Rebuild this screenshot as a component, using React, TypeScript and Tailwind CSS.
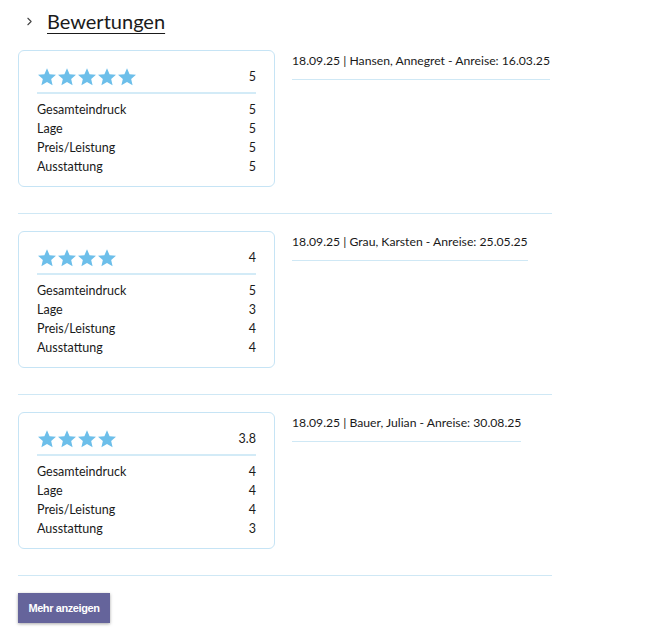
import { LuChevronRight } from "react-icons/lu";

type Review = {
  header: string;
  stars: number;
  score: string;
  rows: [string, number][];
};

const reviews: Review[] = [
  {
    header: "18.09.25 | Hansen, Annegret - Anreise: 16.03.25",
    stars: 5,
    score: "5",
    rows: [
      ["Gesamteindruck", 5],
      ["Lage", 5],
      ["Preis/Leistung", 5],
      ["Ausstattung", 5],
    ],
  },
  {
    header: "18.09.25 | Grau, Karsten - Anreise: 25.05.25",
    stars: 4,
    score: "4",
    rows: [
      ["Gesamteindruck", 5],
      ["Lage", 3],
      ["Preis/Leistung", 4],
      ["Ausstattung", 4],
    ],
  },
  {
    header: "18.09.25 | Bauer, Julian - Anreise: 30.08.25",
    stars: 4,
    score: "3.8",
    rows: [
      ["Gesamteindruck", 4],
      ["Lage", 4],
      ["Preis/Leistung", 4],
      ["Ausstattung", 3],
    ],
  },
];

function Star() {
  return (
    <svg viewBox="0 0 24 24" className="w-[20px] h-[20px]" fill="#6dbfea">
      <path d="M12 1.5l3.1 7.1 7.7.7-5.8 5.1 1.7 7.6L12 18l-6.7 4 1.7-7.6-5.8-5.1 7.7-.7z" />
    </svg>
  );
}

export default function App() {
  return (
    <div className="bg-white min-h-[633px] px-[18px] pt-[6px] text-[#1a1a1a] font-['Lato',sans-serif]">
      {/* Header */}
      <div className="flex items-center gap-[11px] pl-[5px]">
        <LuChevronRight className="w-[13px] h-[13px] text-[#444]" />
        <h2 className="text-[20px] underline underline-offset-[4px] decoration-1">
          Bewertungen
        </h2>
      </div>

      <div className="w-[534px] mt-[14px]">
        {reviews.map((r, i) => (
          <div key={i} className="border-b border-[#cfe8f5] pb-[26px] mb-[17px]">
            <div className="flex gap-[17px]">
              <div className="w-[257px] shrink-0 border border-[#c6e4f5] rounded-[6px] px-[18px] pt-[16px] pb-[10px] text-[12.5px]">
                <div className="flex items-center justify-between border-b-2 border-[#d3ebf7] pb-[5px] mb-[6px]">
                  <div className="flex">
                    {Array.from({ length: r.stars }).map((_, j) => (
                      <Star key={j} />
                    ))}
                  </div>
                  <span>{r.score}</span>
                </div>
                {r.rows.map(([label, val]) => (
                  <div key={label} className="flex justify-between leading-[19px]">
                    <span>{label}</span>
                    <span>{val}</span>
                  </div>
                ))}
              </div>
              <div className="-mt-[3px]">
                <div className="inline-block whitespace-nowrap text-[12.2px] border-b border-[#cfe8f5] pb-[9px]">
                  {r.header}
                </div>
              </div>
            </div>
          </div>
        ))}
      </div>

      <button className="bg-[#65649b] text-white font-bold text-[11px] tracking-[-0.4px] font-['Liberation_Sans',sans-serif] w-[92px] h-[30px] shadow-[0_1px_3px_rgba(0,0,0,0.35)]">
        Mehr anzeigen
      </button>
    </div>
  );
}
